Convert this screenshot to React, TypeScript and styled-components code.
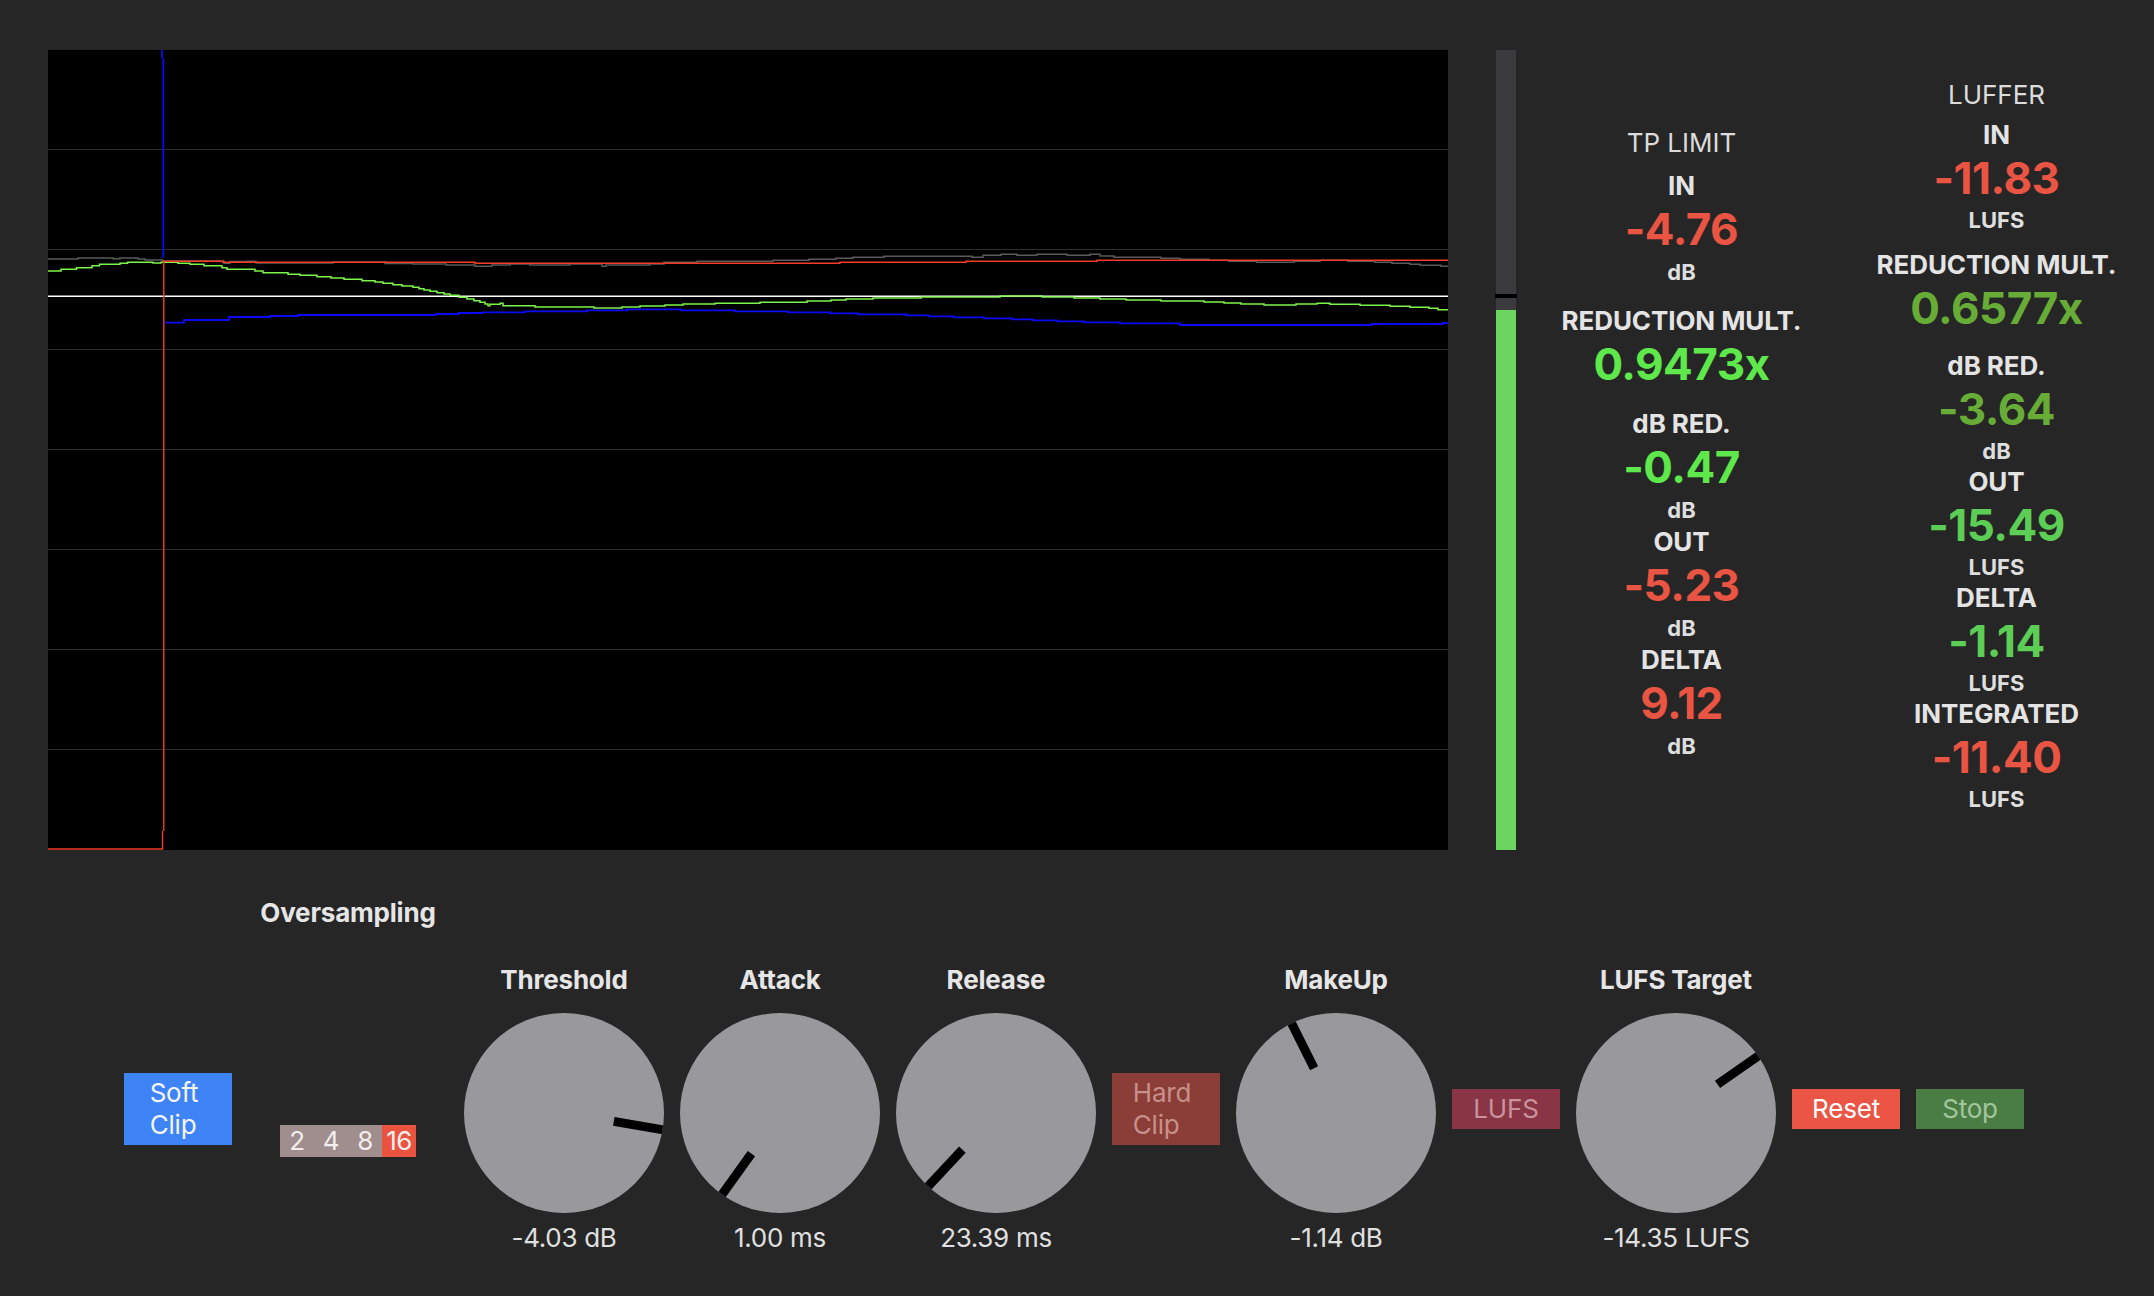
import React from "react";
import styled, { createGlobalStyle } from "styled-components";

const GlobalStyle = createGlobalStyle`
  html, body {
    margin: 0;
    padding: 0;
    background: #262626;
    overflow: hidden;
  }
  body {
    font-family: Inter, "Noto Sans", "Liberation Sans", sans-serif;
    color: #e4e4e4;
  }
`;

const Page = styled.div`
  width: 2154px;
  height: 1296px;
  background: #262626;
  display: flex;
  flex-direction: column;
`;

const TopArea = styled.div`
  display: flex;
  height: 800px;
  padding: 50px 0 0 48px;
`;

const ChartBox = styled.div`
  width: 1400px;
  height: 800px;
  background: #000;
  flex: none;
`;

const ChartSvg = styled.svg`
  display: block;
`;

const Meter = styled.div`
  position: relative;
  width: 20px;
  height: 800px;
  margin-left: 48px;
  background: #3b3b3d;
  display: flex;
  flex-direction: column;
  justify-content: flex-end;
  flex: none;
`;

const MeterFill = styled.div`
  width: 100%;
  background: #6bd55f;
`;

const MeterMarker = styled.div`
  position: absolute;
  left: -1px;
  width: 22px;
  height: 4px;
  background: #000;
`;

const StatsPanel = styled.div`
  flex: 1;
  display: flex;
  margin-left: 8px;
`;

const StatColumnBox = styled.div<{ $padBottom: number }>`
  flex: 1;
  display: flex;
  flex-direction: column;
  align-items: center;
  justify-content: center;
  padding-bottom: ${(p) => p.$padBottom}px;
`;

const ColumnTitle = styled.div<{ $gap: number }>`
  font-size: 26px;
  line-height: 32px;
  font-weight: 400;
  color: #dcdcdc;
  margin-bottom: ${(p) => p.$gap}px;
`;

const Section = styled.div<{ $gap: number }>`
  display: flex;
  flex-direction: column;
  align-items: center;
  margin-bottom: ${(p) => p.$gap}px;
  &:last-child {
    margin-bottom: 0;
  }
`;

const StatLabel = styled.div`
  font-size: 26px;
  line-height: 32px;
  font-weight: 700;
  color: #e4e4e4;
  letter-spacing: -0.1px;
`;

const StatValue = styled.div<{ $color: string }>`
  font-size: 44px;
  line-height: 54px;
  font-weight: 700;
  color: ${(p) => p.$color};
  letter-spacing: -0.5px;
`;

const StatUnit = styled.div<{ $lh: number }>`
  font-size: 22px;
  line-height: ${(p) => p.$lh}px;
  font-weight: 700;
  color: #dedede;
`;

const Controls = styled.div`
  display: grid;
  grid-template-columns: 108px 200px 200px 200px 200px 108px 200px 108px 200px 108px 108px;
  grid-template-rows: auto auto;
  column-gap: 16px;
  row-gap: 35px;
  align-items: center;
  padding: 47px 0 0 124px;
  & > * {
    grid-row: 2;
  }
`;

const GroupTitle = styled.div`
  && {
    grid-row: 1;
    grid-column: 2;
  }
  text-align: center;
  font-size: 26px;
  line-height: 32px;
  font-weight: 700;
  color: #e6e6e6;
  letter-spacing: -0.2px;
`;

const Selector = styled.div`
  display: flex;
  justify-self: center;
  height: 32px;
  margin-top: 64px;
`;

const Segment = styled.div<{ $active: boolean }>`
  width: 34px;
  height: 32px;
  background: ${(p) => (p.$active ? "#e9533f" : "#a08d8d")};
  color: #f2eeee;
  font-size: 26px;
  line-height: 32px;
  text-align: center;
  letter-spacing: -0.5px;
`;

const Btn = styled.button<{ $bg: string; $fg: string; $h: number }>`
  width: 108px;
  height: ${(p) => p.$h}px;
  border: none;
  border-radius: 0;
  margin: 0;
  padding: 0;
  background: ${(p) => p.$bg};
  color: ${(p) => p.$fg};
  font-family: Inter, "Noto Sans", "Liberation Sans", sans-serif;
  font-size: 26px;
  line-height: 32px;
  font-weight: 400;
  display: flex;
  align-items: center;
  justify-content: center;
  letter-spacing: -0.2px;
`;

const BtnText = styled.span<{ $shift?: number }>`
  display: inline-block;
  text-align: left;
  margin-right: ${(p) => p.$shift ?? 0}px;
`;

const KnobColumn = styled.div`
  display: flex;
  flex-direction: column;
  align-items: center;
`;

const KnobLabel = styled.div`
  font-size: 26px;
  line-height: 32px;
  font-weight: 700;
  color: #e6e6e6;
  margin-bottom: 16.5px;
  letter-spacing: -0.2px;
`;

const KnobFace = styled.div`
  position: relative;
  width: 200px;
  height: 200px;
  border-radius: 50%;
  background: #99989d;
  overflow: hidden;
`;

const Pointer = styled.div`
  position: absolute;
  left: 95.5px;
  top: -2px;
  width: 9px;
  height: 52px;
  background: #000;
  transform-origin: 4.5px 102px;
`;

const KnobValue = styled.div`
  font-size: 26px;
  line-height: 32px;
  font-weight: 400;
  color: #e0e0e0;
  margin-top: 9.5px;
  letter-spacing: -0.3px;
`;

const RED = "#ea5443";
const BRIGHT = "#5fe84b";
const DARK = "#67ac37";
const MID = "#5ccd55";

type Stat = { label: string; value: string; color: string; unit?: string };

const tpSections: Stat[][] = [
  [{ label: "IN", value: "-4.76", color: RED, unit: "dB" }],
  [{ label: "REDUCTION MULT.", value: "0.9473x", color: BRIGHT }],
  [
    { label: "dB RED.", value: "-0.47", color: BRIGHT, unit: "dB" },
    { label: "OUT", value: "-5.23", color: RED, unit: "dB" },
    { label: "DELTA", value: "9.12", color: RED, unit: "dB" },
  ],
];

const lufferSections: Stat[][] = [
  [{ label: "IN", value: "-11.83", color: RED, unit: "LUFS" }],
  [{ label: "REDUCTION MULT.", value: "0.6577x", color: DARK }],
  [
    { label: "dB RED.", value: "-3.64", color: DARK, unit: "dB" },
    { label: "OUT", value: "-15.49", color: MID, unit: "LUFS" },
    { label: "DELTA", value: "-1.14", color: MID, unit: "LUFS" },
    { label: "INTEGRATED", value: "-11.40", color: RED, unit: "LUFS" },
  ],
];

function StatColumn(props: {
  title: string;
  titleGap: number;
  sectionGap: number;
  padBottom: number;
  unitLineHeight: number;
  sections: Stat[][];
}) {
  return (
    <StatColumnBox $padBottom={props.padBottom}>
      <ColumnTitle $gap={props.titleGap}>{props.title}</ColumnTitle>
      {props.sections.map((sec, i) => (
        <Section key={i} $gap={props.sectionGap}>
          {sec.map((s) => (
            <React.Fragment key={s.label}>
              <StatLabel>{s.label}</StatLabel>
              <StatValue $color={s.color}>{s.value}</StatValue>
              {s.unit && <StatUnit $lh={props.unitLineHeight}>{s.unit}</StatUnit>}
            </React.Fragment>
          ))}
        </Section>
      ))}
    </StatColumnBox>
  );
}

function Knob(props: { label: string; value: string; angle: number }) {
  return (
    <KnobColumn>
      <KnobLabel>{props.label}</KnobLabel>
      <KnobFace>
        <Pointer style={{ transform: `rotate(${props.angle}deg)` }} />
      </KnobFace>
      <KnobValue>{props.value}</KnobValue>
    </KnobColumn>
  );
}

const grayPath =
  "M48 259 H78 V258 H113 V258.7 H120 V258 H138 V259 H145 V260 H163 V261 H224 V263.3 H230 V261.5 H247 V261.3 H256 V263 H333 V262 H385 V263.5 H413 V264 H446 V265 H475 V266.3 H492 V265 H510 V264 H530 V265 H570 V264 H602 V266.3 H606 V265 H650 V264 H664 V262.3 H697 V261.3 H773 V260.3 H809 V259.3 H836 V258.3 H853 V257.3 H884 V256.3 H972 V257.3 H983 V255.3 H1001 V254.3 H1017 V255.3 H1037 V254.3 H1067 V255.3 H1090 V254.3 H1100 V256 H1114 V257.3 H1161 V258.3 H1180 V259.3 H1209 V260.3 H1229 V261.3 H1257 V262.3 H1294 V261.3 H1320 V260.3 H1348 V261.3 H1375 V262.3 H1392 V263.3 H1410 V264.3 H1420 V265.3 H1441 V266.3 H1448";

const greenPath =
  "M48 271 H61 V269.3 H76.5 V267.7 H92 V265.7 H99.5 V264.3 H120 V263.3 H127.6 V262.3 H153 V263 H161 V262.3 H178 V263.3 H190 V264.3 H204 V265.7 H222 V267.7 H227 V269.3 H255 V271 H263 V272.7 H288 V274.3 H300 V275.3 H317 V276.7 H331 V278 H344 V279.3 H362 V280.7 H375 V282 H383 V283.3 H393 V284.7 H402 V286 H413 V287.3 H419 V288.7 H424 V290 H430 V291.3 H437 V292.7 H444 V294 H450 V295.3 H459 V297.3 H467 V299 H474 V300.7 H480 V302.3 H485 V304 H488 V305.7 H490 V304.3 H500 V303.3 H503 V305.7 H535 V307 H594 V308 H622 V307 H640 V306 H665 V305 H683 V304 H715 V303.3 H760 V302.3 H807 V301 H831 V300 H846 V299 H873 V298 H921 V297 H1000 V296 H1042 V297 H1074 V298 H1100 V299 H1126 V300 H1161 V301 H1204 V302 H1224 V303 H1241 V304 H1264 V305 H1296 V304 H1317 V303.3 H1330 V304.3 H1360 V305.3 H1390 V306.3 H1410 V307.3 H1429 V308.3 H1438 V309.7 H1448";

const bluePath =
  "M162 50 V58 M163.3 58 V258 M165 322.7 H184 V320 H229 V317 H270 V316 H298 V315 H436 V314 H459 V313 H483 V312.3 H525 V311.3 H587 V310.3 H627 V309.3 H681 V310.3 H735 V311.3 H788 V312.3 H830 V313.3 H858 V314.3 H906 V315.3 H929 V316.3 H954 V317.3 H984 V318.3 H1012 V319.3 H1033 V320.3 H1057 V321.3 H1084 V322.3 H1120 V323.3 H1180 V325 H1372 V324 H1443 V323 H1448";

const redPath =
  "M48 849 H162.5 V831 M163.8 831 V261.3 H223 V262.3 H475 V263.3 H840 V262.3 H966 V261.3 H1097 V260.3 H1448";

function Chart() {
  const grid = [150, 250, 350, 450, 550, 650, 750];
  return (
    <ChartBox>
      <ChartSvg width={1400} height={800} viewBox="48 50 1400 800">
        {grid.map((y) => (
          <line key={y} x1={48} x2={1448} y1={y - 0.5} y2={y - 0.5} stroke="#2f2f2f" strokeWidth={1.2} />
        ))}
        <path d={grayPath} fill="none" stroke="#5a5a5a" strokeWidth={1.5} />
        <line x1={48} x2={1448} y1={296.3} y2={296.3} stroke="#ffffff" strokeWidth={1.6} />
        <path d={greenPath} fill="none" stroke="#7cf54b" strokeWidth={1.5} />
        <path d={bluePath} fill="none" stroke="#0a0af5" strokeWidth={1.8} />
        <path d={redPath} fill="none" stroke="#f43c25" strokeWidth={1.4} />
      </ChartSvg>
    </ChartBox>
  );
}

export default function App() {
  return (
    <Page>
      <GlobalStyle />
      <TopArea>
        <Chart />
        <Meter>
          <MeterMarker style={{ top: 244 }} />
          <MeterFill style={{ height: 540 }} />
        </Meter>
        <StatsPanel>
          <StatColumn
            title="TP LIMIT"
            titleGap={11}
            sectionGap={17}
            padBottom={11}
            unitLineHeight={32}
            sections={tpSections}
          />
          <StatColumn
            title="LUFFER"
            titleGap={8}
            sectionGap={14.5}
            padBottom={8}
            unitLineHeight={30}
            sections={lufferSections}
          />
        </StatsPanel>
      </TopArea>
      <Controls>
        <GroupTitle>Oversampling</GroupTitle>
        <Btn $bg="#3e84f7" $fg="#f5f5f5" $h={72}>
          <BtnText $shift={8}>
            Soft
            <br />
            Clip
          </BtnText>
        </Btn>
        <Selector>
          <Segment $active={false}>2</Segment>
          <Segment $active={false}>4</Segment>
          <Segment $active={false}>8</Segment>
          <Segment $active={true}>16</Segment>
        </Selector>
        <Knob label="Threshold" value="-4.03 dB" angle={99.7} />
        <Knob label="Attack" value="1.00 ms" angle={-144.4} />
        <Knob label="Release" value="23.39 ms" angle={-137} />
        <Btn $bg="#8a3e37" $fg="#c8908a" $h={72}>
          <BtnText $shift={8}>
            Hard
            <br />
            Clip
          </BtnText>
        </Btn>
        <Knob label="MakeUp" value="-1.14 dB" angle={-26.6} />
        <Btn $bg="#8a3545" $fg="#c9929c" $h={40}>
          <BtnText>LUFS</BtnText>
        </Btn>
        <Knob label="LUFS Target" value="-14.35 LUFS" angle={55.1} />
        <Btn $bg="#ea5545" $fg="#ffffff" $h={40}>
          <BtnText>Reset</BtnText>
        </Btn>
        <Btn $bg="#4a7d44" $fg="#a3c69d" $h={40}>
          <BtnText>Stop</BtnText>
        </Btn>
      </Controls>
    </Page>
  );
}
